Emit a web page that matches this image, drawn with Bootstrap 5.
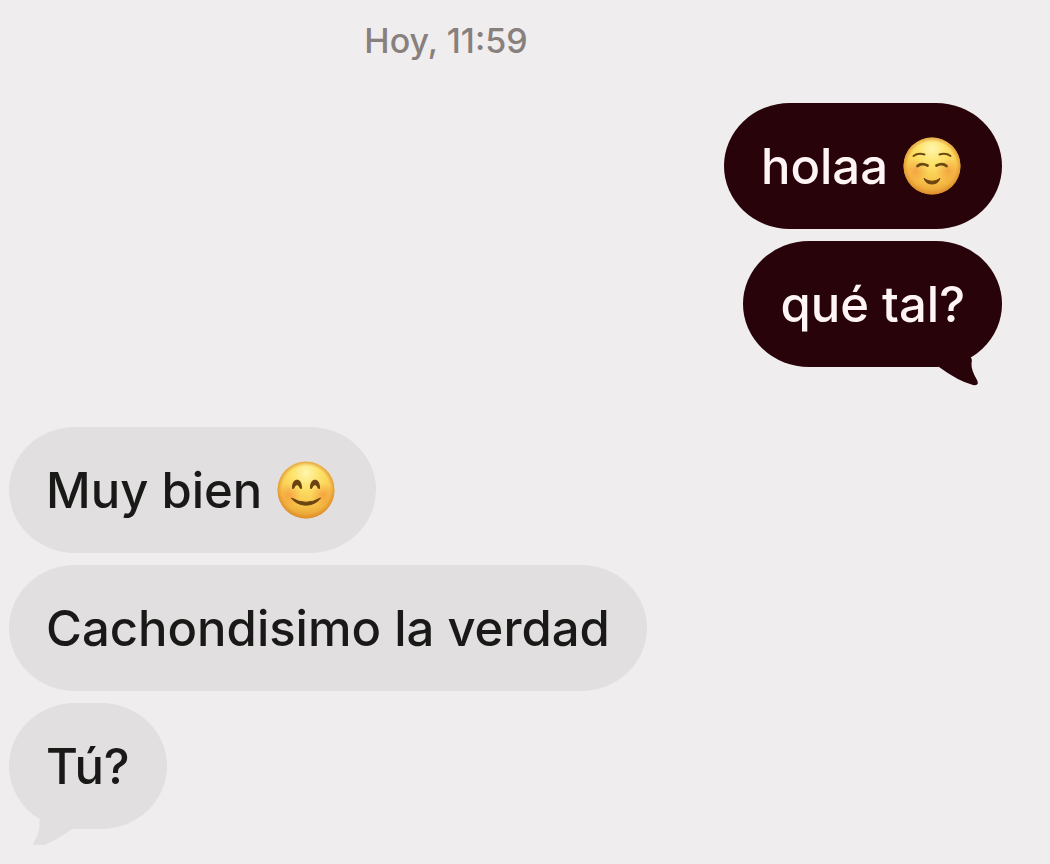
<!DOCTYPE html>
<html lang="es">
<head>
<meta charset="utf-8">
<meta name="viewport" content="width=device-width, initial-scale=1">
<title>Chat</title>
<link href="https://cdn.jsdelivr.net/npm/bootstrap@5.3.0/dist/css/bootstrap.min.css" rel="stylesheet">
<style>
  body { background: #efedee; font-family: Inter, "Liberation Sans", sans-serif; font-weight: 500; }
  .chat { padding: 16px 48px 16px 9px; }
  .stamp { color: #88807d; font-size: 34px; line-height: 50px; padding-right: 119px; margin-bottom: 37px; }
  .thread { gap: 60px; }
  .run { gap: 12px; }
  .bubble { min-height: 126px; padding: 0 37px; border-radius: 66px / 63px; font-size: 49px; line-height: 64px; gap: 15px; }
  .bubble span { padding-top: 2px; }
  .sent .bubble { background: #280309; color: #fff5f6; }
  .received .bubble { background: #e1dfe0; color: #191917; }
  .emoji { width: 58px; height: 58px; margin-right: 4px; }
  .tail { width: 44px; height: 32px; bottom: -20px; }
  .sent .tail { right: 22px; fill: #280309; transform: scaleX(-1); }
  .received .tail { left: 22px; fill: #e1dfe0; }
</style>
</head>
<body>
<svg width="0" height="0" class="position-absolute" aria-hidden="true">
  <defs>
    <radialGradient id="face" cx="50%" cy="20%" r="82%">
      <stop offset="0" stop-color="#fff6ae"/>
      <stop offset=".3" stop-color="#fde26a"/>
      <stop offset=".7" stop-color="#f8c44a"/>
      <stop offset="1" stop-color="#e5972f"/>
    </radialGradient>
    <radialGradient id="rim">
      <stop offset=".84" stop-color="#d98a2c" stop-opacity="0"/>
      <stop offset="1" stop-color="#d98a2c" stop-opacity=".7"/>
    </radialGradient>
    <radialGradient id="blush">
      <stop offset="0" stop-color="#f0752e" stop-opacity=".45"/>
      <stop offset="1" stop-color="#f0752e" stop-opacity="0"/>
    </radialGradient>
    <symbol id="tail" viewBox="0 0 44 32">
      <path d="M11 0Q7 4 8.500 8Q9 15 3 25Q0 31 7 30Q22 26 41 12L30 0Z"/>
    </symbol>
  </defs>
</svg>

<main class="chat d-flex flex-column">
  <time class="stamp text-center" datetime="11:59">Hoy, 11:59</time>
  <div class="thread d-flex flex-column">
    <section class="run sent d-flex flex-column align-items-end">
      <div class="bubble d-flex align-items-center">
        <span>holaa</span>
        <svg class="emoji flex-shrink-0" viewBox="0 0 58 58" role="img" aria-label="☺️">
          <circle cx="29" cy="29" r="28.5" fill="url(#face)"/>
          <circle cx="29" cy="29" r="28.5" fill="url(#rim)"/>
          <circle cx="13" cy="34" r="12" fill="url(#blush)"/>
          <circle cx="45" cy="34" r="12" fill="url(#blush)"/>
          <g fill="none" stroke="#6b4a12" stroke-linecap="round">
            <path d="M10.500 19Q15 15.500 21.500 17.500M36.500 17.500Q43 15.500 47.500 19" stroke-width="2"/>
            <path d="M14.500 29Q18.500 25.500 24.500 28.500M33.500 28.500Q39.500 25.500 43.500 29" stroke-width="2.800"/>
          </g>
          <path d="M21 41.500Q29 47 37 41.500Q35 47 29 47Q23 47 21 41.500Z" fill="#6b4312" stroke="#6b4312" stroke-linejoin="round"/>
        </svg>
      </div>
      <div class="bubble d-flex align-items-center position-relative">
        <span>qué tal?</span>
        <svg class="tail position-absolute" aria-hidden="true"><use href="#tail"/></svg>
      </div>
    </section>
    <section class="run received d-flex flex-column align-items-start">
      <div class="bubble d-flex align-items-center">
        <span>Muy bien</span>
        <svg class="emoji flex-shrink-0" viewBox="0 0 58 58" role="img" aria-label="😊">
          <circle cx="29" cy="29" r="28.5" fill="url(#face)"/>
          <circle cx="29" cy="29" r="28.5" fill="url(#rim)"/>
          <circle cx="12" cy="34" r="12" fill="url(#blush)"/>
          <circle cx="46" cy="34" r="12" fill="url(#blush)"/>
          <path d="M15 26.500C15 16 25 16 25 26.500Q25 29 23 27.500Q20 20.500 17 27.500Q15 29 15 26.500ZM33 26.500C33 16 43 16 43 26.500Q43 29 41 27.500Q38 20.500 35 27.500Q33 29 33 26.500Z" fill="#6b4312"/>
          <path d="M14.500 37Q29 45.500 43.500 37C37 46.500 21 46.500 14.500 37Z" fill="#6b4312" stroke="#6b4312" stroke-linejoin="round"/>
        </svg>
      </div>
      <div class="bubble d-flex align-items-center"><span>Cachondisimo la verdad</span></div>
      <div class="bubble d-flex align-items-center position-relative">
        <span>Tú?</span>
        <svg class="tail position-absolute" aria-hidden="true"><use href="#tail"/></svg>
      </div>
    </section>
  </div>
</main>
<script src="https://cdn.jsdelivr.net/npm/bootstrap@5.3.0/dist/js/bootstrap.bundle.min.js"></script>
</body>
</html>
